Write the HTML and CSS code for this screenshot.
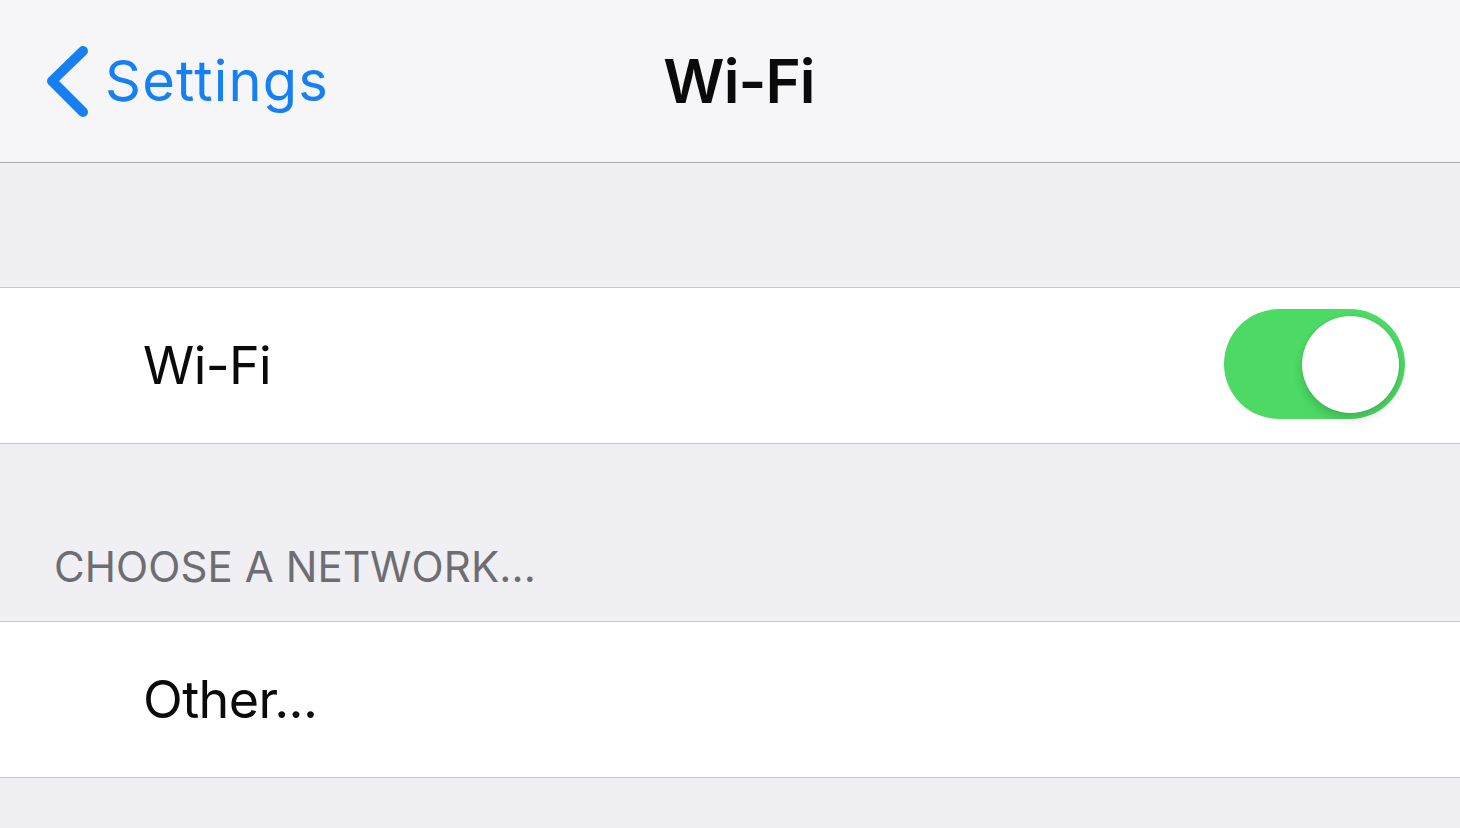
FILE: index.html
```html
<!DOCTYPE html>
<html lang="en">
<head>
  <meta charset="UTF-8">
  <title>Wi-Fi</title>
  <link rel="stylesheet" href="styles.css">
</head>
<body>
  <div class="screen">
    <!-- Navigation bar -->
    <header class="navbar">
      <a class="back" href="#">
        <svg class="chevron" width="50" height="80" viewBox="0 0 50 80">
          <path d="M41 10 L10 40 L41 71" fill="none" stroke="#167ff2" stroke-width="10" stroke-linecap="round" stroke-linejoin="round"/>
        </svg>
        <span>Settings</span>
      </a>
      <h1 class="title">Wi-Fi</h1>
      <div></div>
    </header>

    <div class="gap"></div>

    <section class="group">
      <div class="row">
        <span class="row-label">Wi-Fi</span>
        <div class="toggle on"><div class="knob"></div></div>
      </div>
    </section>

    <div class="section-header">CHOOSE A NETWORK...</div>

    <section class="group">
      <div class="row">
        <span class="row-label">Other...</span>
      </div>
    </section>

    <div class="filler"></div>
  </div>
</body>
</html>
```

FILE: styles.css
```css
/* Reset */
* { box-sizing: border-box; margin: 0; padding: 0; }
html, body {
  width: 100%; height: 100%;
  background: #efeff4;          /* grouped table background */
  font-family: Inter, "Noto Sans", sans-serif;
  color: #0a0a0a;
  overflow: hidden;
}

.screen {
  display: flex;
  flex-direction: column;
  height: 100%;
}

/* Top navigation bar */
.navbar {
  height: 163px;
  flex-shrink: 0;
  background: #f6f6f8;
  border-bottom: 1px solid #a9a9ad;
  display: grid;
  grid-template-columns: 1fr auto 1fr;
  align-items: center;
}
.back {
  display: flex;
  align-items: center;
  padding-left: 42px;
  gap: 13px;
  color: #167ff2;
  text-decoration: none;
  font-size: 56px;
  letter-spacing: 1.2px;
}
.chevron { flex-shrink: 0; }
.title {
  font-size: 60px;
  font-weight: 600;
  letter-spacing: -0.9px;
  padding-left: 18px;
}

/* Empty band above the first group */
.gap {
  height: 124px;
  flex-shrink: 0;
}

/* White grouped section */
.group {
  background: #fff;
  border-top: 1px solid #c8c7cc;
  border-bottom: 1px solid #c8c7cc;
  flex-shrink: 0;
}
.row {
  height: 155px;
  display: flex;
  align-items: center;
  justify-content: space-between;
  padding: 0 55px 0 143px;
}
.row-label {
  font-size: 52px;
  letter-spacing: -0.6px;
}

/* Switch */
.toggle {
  width: 181px;
  height: 110px;
  border-radius: 55px;
  background: #4cd964;
  padding: 7px 6px;
  display: flex;
  justify-content: flex-end;
  margin-top: -4px;
}
.knob {
  width: 97px;
  height: 97px;
  border-radius: 50%;
  background: #fff;
  box-shadow: 0 6px 10px rgba(0, 0, 0, 0.15), 0 0 0 1px rgba(0, 0, 0, 0.04);
}

/* Section header text */
.section-header {
  height: 177px;
  flex-shrink: 0;
  padding: 98px 0 0 54px;
  font-size: 42px;
  line-height: 50px;
  letter-spacing: 0.1px;
  color: #6d6d72;
}

.filler { flex: 1; }
```
